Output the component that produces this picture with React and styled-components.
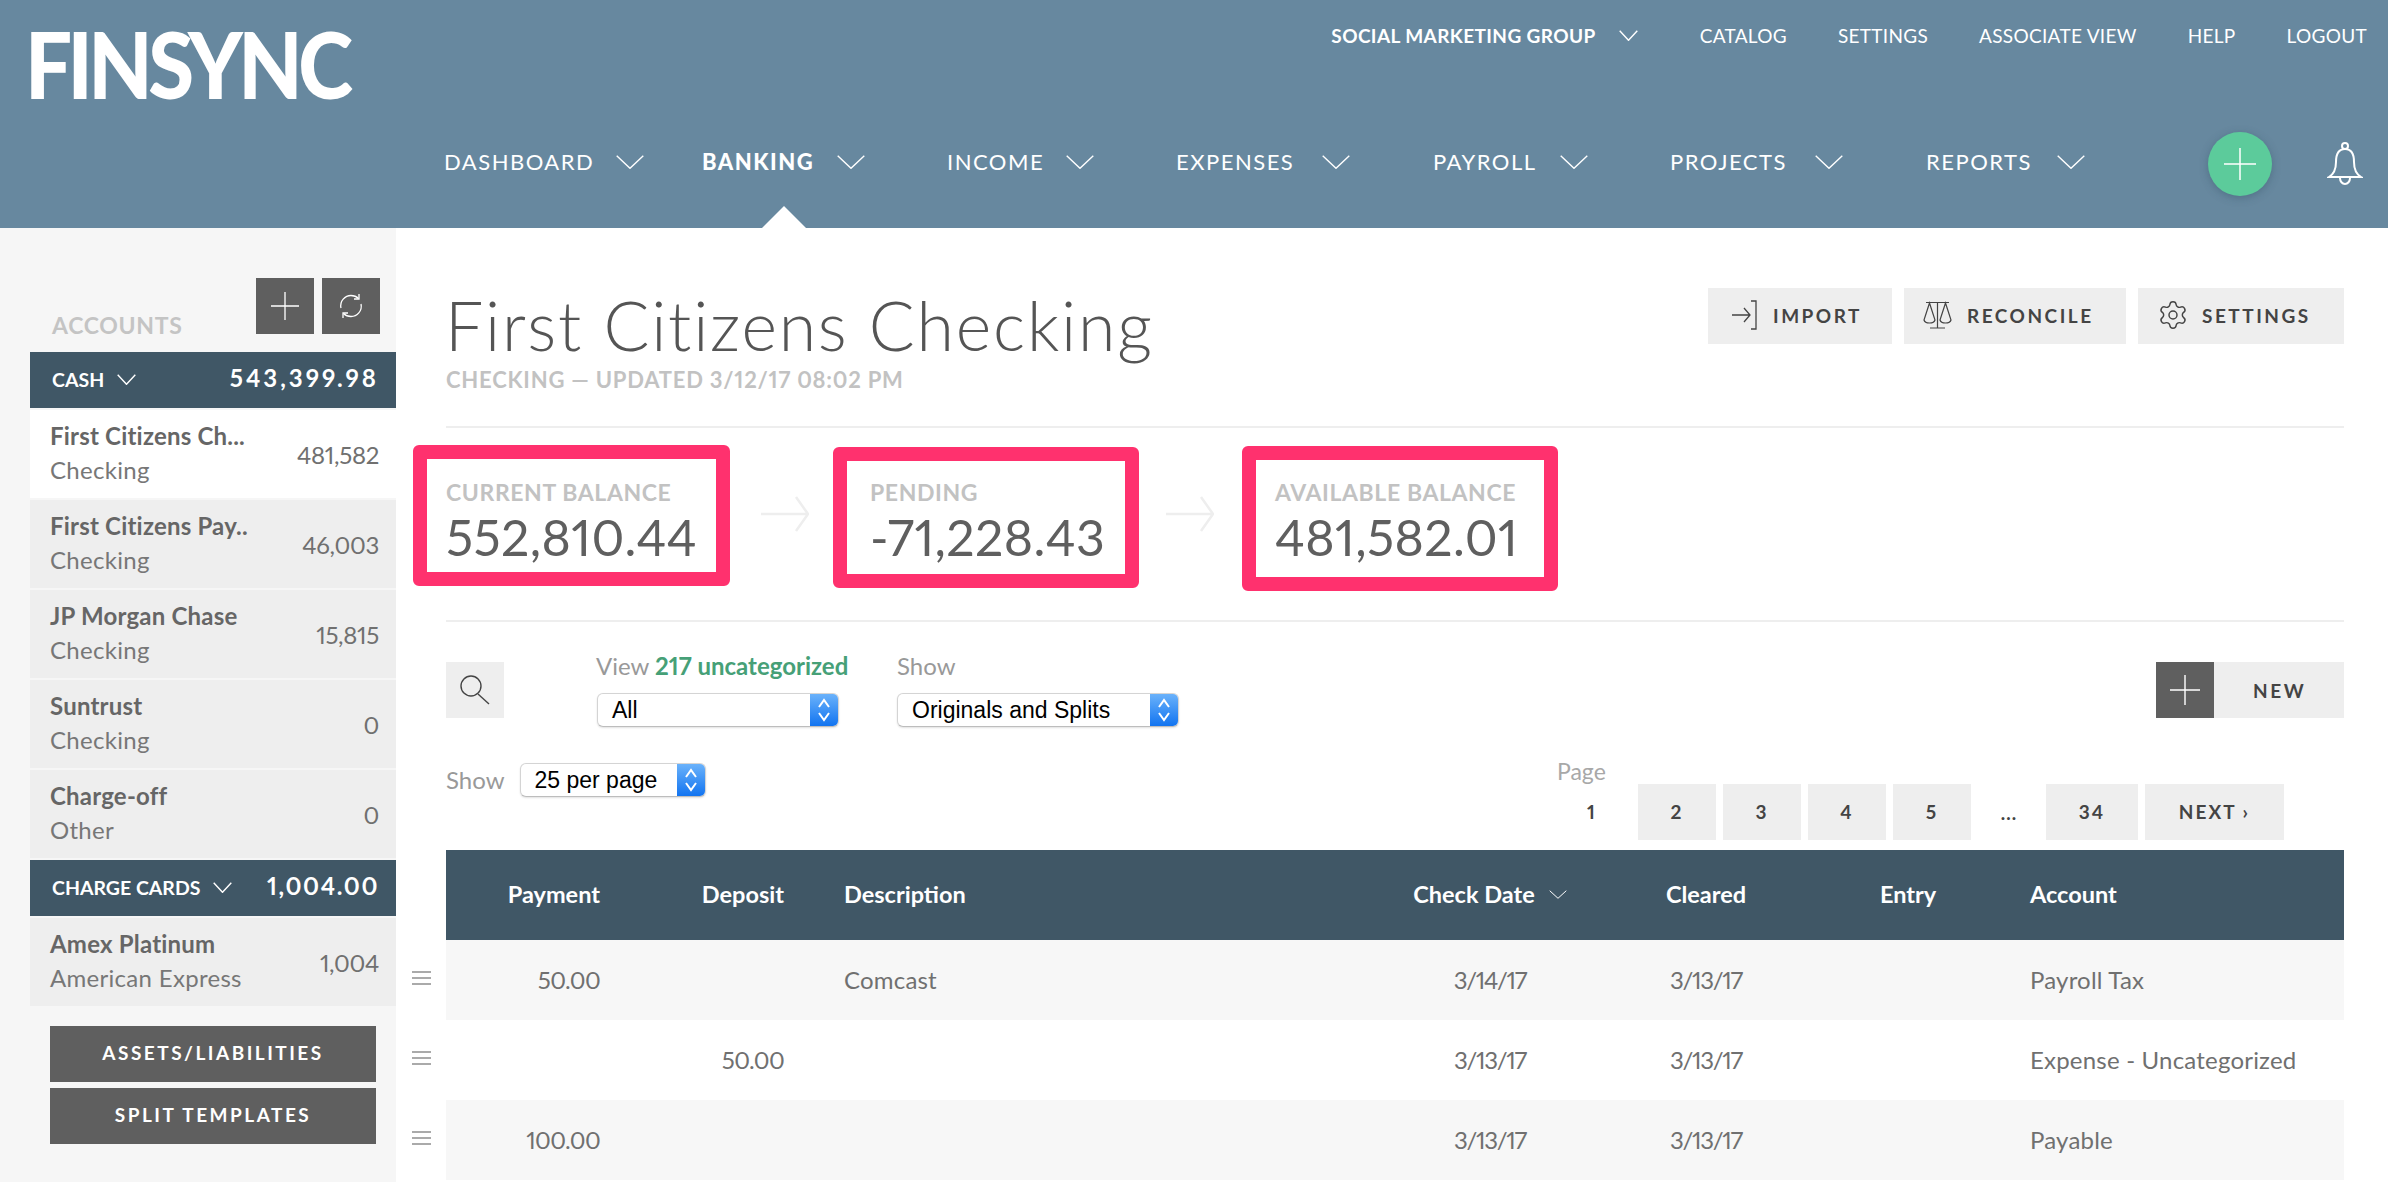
import React from "react";
import styled, { createGlobalStyle } from "styled-components";
import { Settings } from "lucide-react";

const GlobalStyle = createGlobalStyle`
  html, body {
    margin: 0;
    padding: 0;
    height: 100%;
    overflow: hidden;
    background: #fff;
  }
  body {
    font-family: "Lato", "Open Sans", sans-serif;
    font-variant-numeric: proportional-nums;
    color: #666;
  }
  * {
    box-sizing: border-box;
  }
`;

const Page = styled.div`
  width: 2388px;
  height: 1182px;
  overflow: hidden;
  display: flex;
  flex-direction: column;
`;

/* header */

const Header = styled.header`
  height: 228px;
  flex: none;
  background: #67889f;
  color: #fff;
  display: flex;
  flex-direction: column;
`;

const HeaderTop = styled.div`
  height: 132px;
  display: flex;
  justify-content: space-between;
  padding: 0 21px 0 25px;
`;

const Logo = styled.div`
  font-family: "Lato", sans-serif;
  font-weight: 900;
  font-size: 92px;
  line-height: 92px;
  letter-spacing: -5px;
  margin-top: 18px;
  height: 92px;
  transform: scaleX(0.905);
  transform-origin: left center;
`;

const TopLinks = styled.nav`
  display: flex;
  align-items: center;
  gap: 51px;
  height: 70px;
`;

const TopLink = styled.a`
  font-size: 19px;
  letter-spacing: ${(p) => (p.$bold ? "0.4px" : "0.3px")};
  font-weight: ${(p) => (p.$bold ? 700 : 400)};
  display: flex;
  align-items: center;
  gap: 23px;
  margin-right: ${(p) => (p.$bold ? "11px" : "0")};
`;

const MainNav = styled.nav`
  display: flex;
  align-items: flex-start;
  padding-left: 444px;
  height: 96px;
`;

const NavItem = styled.a`
  position: relative;
  display: flex;
  align-items: center;
  gap: 26px;
  height: 96px;
  padding-bottom: 37px;
  margin-right: ${(p) => p.$gap}px;
  font-size: 22px;
  letter-spacing: 1.5px;
  font-weight: ${(p) => (p.$active ? 900 : 400)};

  ${(p) =>
    p.$active &&
    `
    &::after {
      content: "";
      position: absolute;
      left: 60px;
      bottom: 0;
      border-left: 22px solid transparent;
      border-right: 22px solid transparent;
      border-bottom: 22px solid #fff;
    }
  `}
`;

const NavLabel = styled.span`
  width: ${(p) => p.$w}px;
  white-space: nowrap;
`;

const AddCircle = styled.button`
  width: 64px;
  height: 64px;
  border: 0;
  border-radius: 50%;
  background: #5ccb9b;
  box-shadow: 0 2px 8px rgba(40, 70, 90, 0.35);
  display: flex;
  align-items: center;
  justify-content: center;
  padding: 0;
`;

const NavEnd = styled.div`
  display: flex;
  align-items: center;
  gap: 55px;
  position: relative;
  margin-left: auto;
  padding-right: 25px;
`;

/* sidebar */

const Body = styled.div`
  flex: 1;
  display: flex;
  min-height: 0;
`;

const Sidebar = styled.aside`
  width: 396px;
  flex: none;
  background: #f6f6f6;
`;

const SideTop = styled.div`
  height: 124px;
  padding: 50px 16px 18px 52px;
  display: flex;
  align-items: flex-end;
  justify-content: space-between;
`;

const SideTitle = styled.div`
  font-size: 23px;
  letter-spacing: 0.7px;
  font-weight: 700;
  line-height: 24px;
  color: #c4c4c4;
  margin-bottom: -3px;
`;

const SideTools = styled.div`
  display: flex;
  gap: 8px;
`;

const ToolButton = styled.button`
  width: 58px;
  height: 56px;
  border: 0;
  padding: 0;
  background: #5f5f5f;
  display: flex;
  align-items: center;
  justify-content: center;
`;

const SideList = styled.div`
  margin-left: 30px;
  display: flex;
  flex-direction: column;
`;

const GroupHead = styled.div`
  height: 56px;
  background: #405766;
  color: #fff;
  display: flex;
  align-items: center;
  justify-content: space-between;
  padding: 0 17px 0 22px;
  margin-top: ${(p) => (p.$first ? "0" : "2px")};
`;

const GroupName = styled.span`
  display: flex;
  align-items: center;
  gap: 13px;
  font-size: 19.5px;
  font-weight: 700;
  margin-top: -2px;
`;

const GroupTotal = styled.span`
  font-size: 24px;
  font-weight: 700;
  letter-spacing: ${(p) => p.$spacing}px;
  margin-top: -5px;
`;

const AccountRow = styled.div`
  height: 88px;
  margin-top: 2px;
  background: ${(p) => (p.$active ? "#fff" : "#eee")};
  padding: 13px 17px 0 20px;
  display: flex;
  justify-content: space-between;
`;

const AccountName = styled.div`
  font-size: 24px;
  letter-spacing: 0.2px;
  line-height: 26px;
  font-weight: 700;
  color: #666;
`;

const AccountType = styled.div`
  font-size: 24px;
  letter-spacing: 0.3px;
  line-height: 26px;
  font-weight: 400;
  color: #777;
  margin-top: 8px;
`;

const AccountAmount = styled.div`
  font-size: 24px;
  letter-spacing: -0.3px;
  font-weight: 400;
  line-height: 26px;
  color: #707070;
  margin-top: 19px;
`;

const SideButtons = styled.div`
  margin: 20px 0 0 50px;
  width: 326px;
  display: flex;
  flex-direction: column;
  gap: 6px;
`;

const SideButton = styled.button`
  height: 56px;
  border: 0;
  padding: 0 0 3px;
  background: #5f5f5f;
  color: #fff;
  font-family: inherit;
  font-size: 19px;
  font-weight: 700;
  letter-spacing: 2.5px;
`;

/* main */

const Main = styled.main`
  flex: 1;
  min-width: 0;
  padding: 0 44px 0 50px;
`;

const TitleRow = styled.div`
  display: flex;
  justify-content: space-between;
  align-items: flex-start;
`;

const Title = styled.h1`
  margin: 63px 0 0 -1px;
  font-size: 68px;
  line-height: 68px;
  font-weight: 300;
  letter-spacing: 1.8px;
  color: #555;
`;

const SubTitle = styled.div`
  margin-top: 9px;
  font-size: 22px;
  letter-spacing: 0.78px;
  line-height: 24px;
  font-weight: 700;
  color: #c2c2c2;
`;

const Actions = styled.div`
  display: flex;
  gap: 12px;
  margin-top: 60px;
`;

const ActionButton = styled.button`
  height: 56px;
  width: ${(p) => p.$w}px;
  border: 0;
  background: #eee;
  color: #444;
  font-family: inherit;
  font-size: 19px;
  font-weight: 700;
  letter-spacing: 2.5px;
  display: flex;
  align-items: center;
  padding: 0 0 2px ${(p) => p.$pad}px;
  gap: ${(p) => p.$gap}px;
`;

const Divider = styled.div`
  height: 2px;
  background: #eee;
  margin-top: ${(p) => p.$top}px;
`;

const Stats = styled.div`
  height: 192px;
  margin-left: -33px;
  padding-top: 17px;
  display: flex;
  align-items: flex-start;
`;

const StatBox = styled.div`
  width: ${(p) => p.$w}px;
  height: ${(p) => p.$h}px;
  margin-top: ${(p) => p.$top}px;
  border: 14px solid #ff316e;
  border-radius: 6px;
  padding: ${(p) => 21 - p.$top}px 0 0 ${(p) => p.$left}px;
  flex: none;
`;

const StatLabel = styled.div`
  font-size: 23px;
  letter-spacing: 0.6px;
  line-height: 24px;
  font-weight: 700;
  color: #c2c2c2;
`;

const StatValue = styled.div`
  margin-top: 8px;
  font-size: 50px;
  letter-spacing: 0.4px;
  line-height: 50px;
  font-weight: 400;
  color: #5f5f5f;
`;

const StatArrow = styled.svg`
  width: 48px;
  height: 36px;
  flex: none;
  margin: 51px ${(p) => 55 - p.$left}px 0 ${(p) => p.$left}px;
`;

const Filters = styled.div`
  margin-top: 33px;
  height: 72px;
  display: flex;
  align-items: flex-start;
`;

const SearchButton = styled.button`
  width: 58px;
  height: 56px;
  border: 0;
  padding: 0;
  margin: 7px 92px 0 0;
  background: #eee;
  display: flex;
  align-items: center;
  justify-content: center;
`;

const FilterCol = styled.div`
  width: ${(p) => p.$w}px;
`;

const FilterLabel = styled.div`
  font-size: 24px;
  line-height: 24px;
  color: #999;
  margin-top: -1px;
`;

const GreenText = styled.span`
  color: #46a077;
  font-weight: 700;
`;

const FakeSelect = styled.div`
  width: ${(p) => p.$w}px;
  height: 34px;
  margin: ${(p) => p.$top || 0}px 0 0 ${(p) => p.$left ?? 1}px;
  background: #fff;
  border: 1px solid #d4d4d4;
  border-bottom-color: #bdbdbd;
  border-radius: 6px;
  box-shadow: 0 1px 2px rgba(0, 0, 0, 0.12);
  display: flex;
  align-items: center;
  justify-content: space-between;
  overflow: hidden;
  font-family: "Liberation Sans", sans-serif;
  font-size: 23px;
  color: #000;
  padding-left: 14px;
`;

const Stepper = styled.span`
  width: 28px;
  height: 34px;
  flex: none;
  background: linear-gradient(#6db4fb, #0f72f0);
  display: flex;
  align-items: center;
  justify-content: center;
`;

const NewButton = styled.button`
  margin: 7px 0 0 auto;
  width: 188px;
  height: 56px;
  border: 0;
  padding: 0;
  background: #eee;
  color: #444;
  font-family: inherit;
  font-size: 19px;
  font-weight: 700;
  letter-spacing: 2.6px;
  display: flex;
  align-items: center;
`;

const NewIcon = styled.span`
  width: 58px;
  height: 56px;
  background: #5f5f5f;
  display: flex;
  align-items: center;
  justify-content: center;
  margin-right: 39px;
`;

const PagerRow = styled.div`
  margin-top: 33px;
  height: 80px;
  display: flex;
  align-items: flex-start;
  justify-content: space-between;
`;

const ShowGroup = styled.div`
  display: flex;
  align-items: center;
  gap: 14px;
  margin-top: 3px;
`;

const Pager = styled.div`
  margin-right: 60px;
`;

const PageLabel = styled.div`
  font-size: 23px;
  line-height: 24px;
  color: #a8a8a8;
  margin-left: 4px;
  margin-top: -1px;
  margin-bottom: 1px;
`;

const PageList = styled.div`
  display: flex;
  gap: 7px;
`;

const PageButton = styled.a`
  width: ${(p) => p.$w}px;
  height: 56px;
  padding-bottom: 2px;
  background: ${(p) => (p.$plain ? "transparent" : "#eee")};
  color: #444;
  font-size: ${(p) => (p.$dots ? 23 : 19)}px;
  font-weight: ${(p) => (p.$dots ? 400 : 700)};
  letter-spacing: ${(p) => (p.$dots ? "0" : "2px")};
  display: flex;
  align-items: center;
  justify-content: center;
`;

/* table */

const Columns = styled.div`
  display: grid;
  grid-template-columns: 154px 184px 596px 220px 212px 192px 1fr;
  align-items: center;
`;

const TableHead = styled(Columns)`
  margin-top: 10px;
  height: 90px;
  padding-bottom: 2px;
  background: #405766;
  color: #fff;
  font-size: 23.5px;
  font-weight: 700;
`;

const Row = styled.div`
  display: flex;
  margin-left: -35px;
  height: 80px;
`;

const Handle = styled.div`
  width: 35px;
  flex: none;
  display: flex;
  align-items: center;
  padding: 0 0 4px 1px;
`;

const HandleLines = styled.span`
  width: 19px;
  height: 14px;
  border-top: 2px solid #aaa;
  border-bottom: 2px solid #aaa;
  position: relative;

  &::before {
    content: "";
    position: absolute;
    left: 0;
    right: 0;
    top: 4px;
    height: 2px;
    background: #aaa;
  }
`;

const RowCells = styled(Columns)`
  flex: 1;
  padding-bottom: 2px;
  background: ${(p) => (p.$alt ? "#f7f7f7" : "#fff")};
  font-size: 24px;
  letter-spacing: 0.2px;
  font-weight: 400;
  color: #707070;
`;

const Cell = styled.div`
  text-align: ${(p) => p.$align || "left"};
  padding-left: ${(p) => p.$pad || 0}px;
`;

const AmountCell = styled(Cell)`
  letter-spacing: -0.7px;
`;

const DateCell = styled(Cell)`
  letter-spacing: -1.3px;
`;

const SortLabel = styled.span`
  display: inline-flex;
  align-items: center;
  gap: 14px;
`;

function Chevron({ w = 28, h = 14, sw = 1.4, color = "#fff" }) {
  return (
    <svg width={w} height={h} viewBox={`0 0 ${w} ${h}`} fill="none" stroke={color} strokeWidth={sw}>
      <path d={`M0.7 0.7 L${w / 2} ${h - 0.7} L${w - 0.7} 0.7`} />
    </svg>
  );
}

function Plus({ size = 32, sw = 1.5 }) {
  return (
    <svg width={size} height={size} viewBox="0 0 32 32" stroke="#fff" strokeWidth={sw}>
      <path d="M16 0 V32 M0 16 H32" />
    </svg>
  );
}

function StepperIcon() {
  return (
    <svg width="14" height="24" viewBox="0 0 14 24" fill="none" stroke="#fff" strokeWidth="2">
      <path d="M2 9 L7 2 L12 9 M2 15 L7 22 L12 15" />
    </svg>
  );
}

function Arrow({ left }) {
  return (
    <StatArrow $left={left} viewBox="0 0 48 36" fill="none" stroke="#eeeeee" strokeWidth="2.5">
      <path d="M0 18 H46 M35 1 L47 18 L35 35" />
    </StatArrow>
  );
}

const accounts = [
  { name: "First Citizens Ch...", type: "Checking", amount: "481,582", active: true },
  { name: "First Citizens Pay..", type: "Checking", amount: "46,003" },
  { name: "JP Morgan Chase", type: "Checking", amount: "15,815" },
  { name: "Suntrust", type: "Checking", amount: "0" },
  { name: "Charge-off", type: "Other", amount: "0" },
];

const navItems = [
  { label: "DASHBOARD", w: 146, gap: 58 },
  { label: "BANKING", w: 109, gap: 82, active: true },
  { label: "INCOME", w: 93, gap: 82 },
  { label: "EXPENSES", w: 120, gap: 83 },
  { label: "PAYROLL", w: 101, gap: 82 },
  { label: "PROJECTS", w: 119, gap: 83 },
  { label: "REPORTS", w: 105, gap: 0 },
];

const rows = [
  { payment: "50.00", deposit: "", description: "Comcast", check: "3/14/17", cleared: "3/13/17", account: "Payroll Tax" },
  { payment: "", deposit: "50.00", description: "", check: "3/13/17", cleared: "3/13/17", account: "Expense - Uncategorized" },
  { payment: "100.00", deposit: "", description: "", check: "3/13/17", cleared: "3/13/17", account: "Payable" },
];

function AccountItem({ account }) {
  return (
    <AccountRow $active={account.active}>
      <div>
        <AccountName>{account.name}</AccountName>
        <AccountType>{account.type}</AccountType>
      </div>
      <AccountAmount>{account.amount}</AccountAmount>
    </AccountRow>
  );
}

export default function App() {
  return (
    <Page>
      <GlobalStyle />
      <Header>
        <HeaderTop>
          <Logo>FINSYNC</Logo>
          <TopLinks>
            <TopLink $bold>
              SOCIAL MARKETING GROUP <Chevron w={19} h={11} />
            </TopLink>
            <TopLink>CATALOG</TopLink>
            <TopLink>SETTINGS</TopLink>
            <TopLink>ASSOCIATE VIEW</TopLink>
            <TopLink>HELP</TopLink>
            <TopLink>LOGOUT</TopLink>
          </TopLinks>
        </HeaderTop>
        <MainNav>
          {navItems.map((item) => (
            <NavItem key={item.label} $gap={item.gap} $active={item.active}>
              <NavLabel $w={item.w}>{item.label}</NavLabel>
              <Chevron />
            </NavItem>
          ))}
          <NavEnd>
            <AddCircle>
              <Plus />
            </AddCircle>
            <svg width="36" height="44" viewBox="0 0 36 44" fill="none" stroke="#fff" strokeWidth="2">
              <circle cx="18" cy="4" r="3" />
              <path d="M18 7 C11 7 9 13 9 20 C9 28 7 32 2 35 H34 C29 32 27 28 27 20 C27 13 25 7 18 7 Z" />
              <path d="M13 36 A5 6 0 0 0 23 36" />
            </svg>
          </NavEnd>
        </MainNav>
      </Header>
      <Body>
        <Sidebar>
          <SideTop>
            <SideTitle>ACCOUNTS</SideTitle>
            <SideTools>
              <ToolButton>
                <Plus size={28} />
              </ToolButton>
              <ToolButton>
                <svg width="26" height="26" viewBox="0 0 26 26" fill="none" stroke="#fff" strokeWidth="1.3">
                  <path d="M3 15 C1.5 8 7 2.5 13 2.5 C16 2.5 18.5 3.5 20.5 5.5" />
                  <path d="M21 1 V6 H16" />
                  <path d="M23 11 C24.5 18 19 23.5 13 23.5 C10 23.5 7.5 22.5 5.5 20.5" />
                  <path d="M5 25 V20 H10" />
                </svg>
              </ToolButton>
            </SideTools>
          </SideTop>
          <SideList>
            <GroupHead $first>
              <GroupName>
                CASH <Chevron w={19} h={11} />
              </GroupName>
              <GroupTotal $spacing={3}>543,399.98</GroupTotal>
            </GroupHead>
            {accounts.map((account) => (
              <AccountItem key={account.name} account={account} />
            ))}
            <GroupHead>
              <GroupName>
                CHARGE CARDS <Chevron w={19} h={11} />
              </GroupName>
              <GroupTotal $spacing={1.6}>1,004.00</GroupTotal>
            </GroupHead>
            <AccountItem account={{ name: "Amex Platinum", type: "American Express", amount: "1,004" }} />
          </SideList>
          <SideButtons>
            <SideButton>ASSETS/LIABILITIES</SideButton>
            <SideButton>SPLIT TEMPLATES</SideButton>
          </SideButtons>
        </Sidebar>
        <Main>
          <TitleRow>
            <div>
              <Title>First Citizens Checking</Title>
              <SubTitle>CHECKING — UPDATED 3/12/17 08:02 PM</SubTitle>
            </div>
            <Actions>
              <ActionButton $w={184} $pad={24} $gap={16}>
                <svg width="25" height="30" viewBox="0 0 25 30" fill="none" stroke="#444" strokeWidth="1.3">
                  <path d="M0 15 H18 M12 8 L18 15 L12 22 M19 1 H24 V29 H19" />
                </svg>
                IMPORT
              </ActionButton>
              <ActionButton $w={222} $pad={19} $gap={15}>
                <svg width="29" height="28" viewBox="0 0 29 28" fill="none" stroke="#444" strokeWidth="1.2">
                  <path d="M3 1.5 H26 M14.5 1.5 V26.5 M7 27 H22" />
                  <path d="M6.5 2 L1 19 C2 23 11 23 12 19 Z" />
                  <path d="M22.5 2 L17 19 C18 23 27 23 28 19 Z" />
                </svg>
                RECONCILE
              </ActionButton>
              <ActionButton $w={206} $pad={19} $gap={13}>
                <Settings size={32} strokeWidth={1.1} color="#444" />
                SETTINGS
              </ActionButton>
            </Actions>
          </TitleRow>
          <Divider $top={34} />
          <Stats>
            <StatBox $w={317} $h={141} $top={0} $left={19}>
              <StatLabel>CURRENT BALANCE</StatLabel>
              <StatValue>552,810.44</StatValue>
            </StatBox>
            <Arrow left={31} />
            <StatBox $w={306} $h={141} $top={2} $left={23}>
              <StatLabel>PENDING</StatLabel>
              <StatValue>-71,228.43</StatValue>
            </StatBox>
            <Arrow left={27} />
            <StatBox $w={316} $h={145} $top={1} $left={19}>
              <StatLabel>AVAILABLE BALANCE</StatLabel>
              <StatValue>481,582.01</StatValue>
            </StatBox>
          </Stats>
          <Divider $top={0} />
          <Filters>
            <SearchButton>
              <svg width="30" height="30" viewBox="0 0 30 30" fill="none" stroke="#444" strokeWidth="1.4">
                <circle cx="11" cy="11" r="10" />
                <path d="M18 19 L29 29" />
              </svg>
            </SearchButton>
            <FilterCol $w={301}>
              <FilterLabel>
                View <GreenText>217 uncategorized</GreenText>
              </FilterLabel>
              <FakeSelect $w={242} $top={15}>
                All
                <Stepper>
                  <StepperIcon />
                </Stepper>
              </FakeSelect>
            </FilterCol>
            <FilterCol $w={300}>
              <FilterLabel>Show</FilterLabel>
              <FakeSelect $w={282} $top={15} $left={0}>
                Originals and Splits
                <Stepper>
                  <StepperIcon />
                </Stepper>
              </FakeSelect>
            </FilterCol>
            <NewButton>
              <NewIcon>
                <Plus size={30} />
              </NewIcon>
              NEW
            </NewButton>
          </Filters>
          <PagerRow>
            <ShowGroup>
              <FilterLabel>Show</FilterLabel>
              <FakeSelect $w={186}>
                25 per page
                <Stepper>
                  <StepperIcon />
                </Stepper>
              </FakeSelect>
            </ShowGroup>
            <Pager>
              <PageLabel>Page</PageLabel>
              <PageList>
                <PageButton $w={78} $plain>1</PageButton>
                <PageButton $w={78}>2</PageButton>
                <PageButton $w={78}>3</PageButton>
                <PageButton $w={78}>4</PageButton>
                <PageButton $w={78}>5</PageButton>
                <PageButton $w={61} $plain $dots>...</PageButton>
                <PageButton $w={92}>34</PageButton>
                <PageButton $w={139}>NEXT ›</PageButton>
              </PageList>
            </Pager>
          </PagerRow>
          <TableHead>
            <Cell $align="right">Payment</Cell>
            <Cell $align="right">Deposit</Cell>
            <Cell $pad={60}>Description</Cell>
            <Cell $align="center">
              <SortLabel>
                Check Date <Chevron w={18} h={9} sw={1} />
              </SortLabel>
            </Cell>
            <Cell $align="center">Cleared</Cell>
            <Cell $align="center">Entry</Cell>
            <Cell $pad={26}>Account</Cell>
          </TableHead>
          {rows.map((row, i) => (
            <Row key={i}>
              <Handle>
                <HandleLines />
              </Handle>
              <RowCells $alt={i % 2 === 0}>
                <AmountCell $align="right">{row.payment}</AmountCell>
                <AmountCell $align="right">{row.deposit}</AmountCell>
                <Cell $pad={60}>{row.description}</Cell>
                <DateCell $align="center">{row.check}</DateCell>
                <DateCell $align="center">{row.cleared}</DateCell>
                <Cell />
                <Cell $pad={26}>{row.account}</Cell>
              </RowCells>
            </Row>
          ))}
        </Main>
      </Body>
    </Page>
  );
}
